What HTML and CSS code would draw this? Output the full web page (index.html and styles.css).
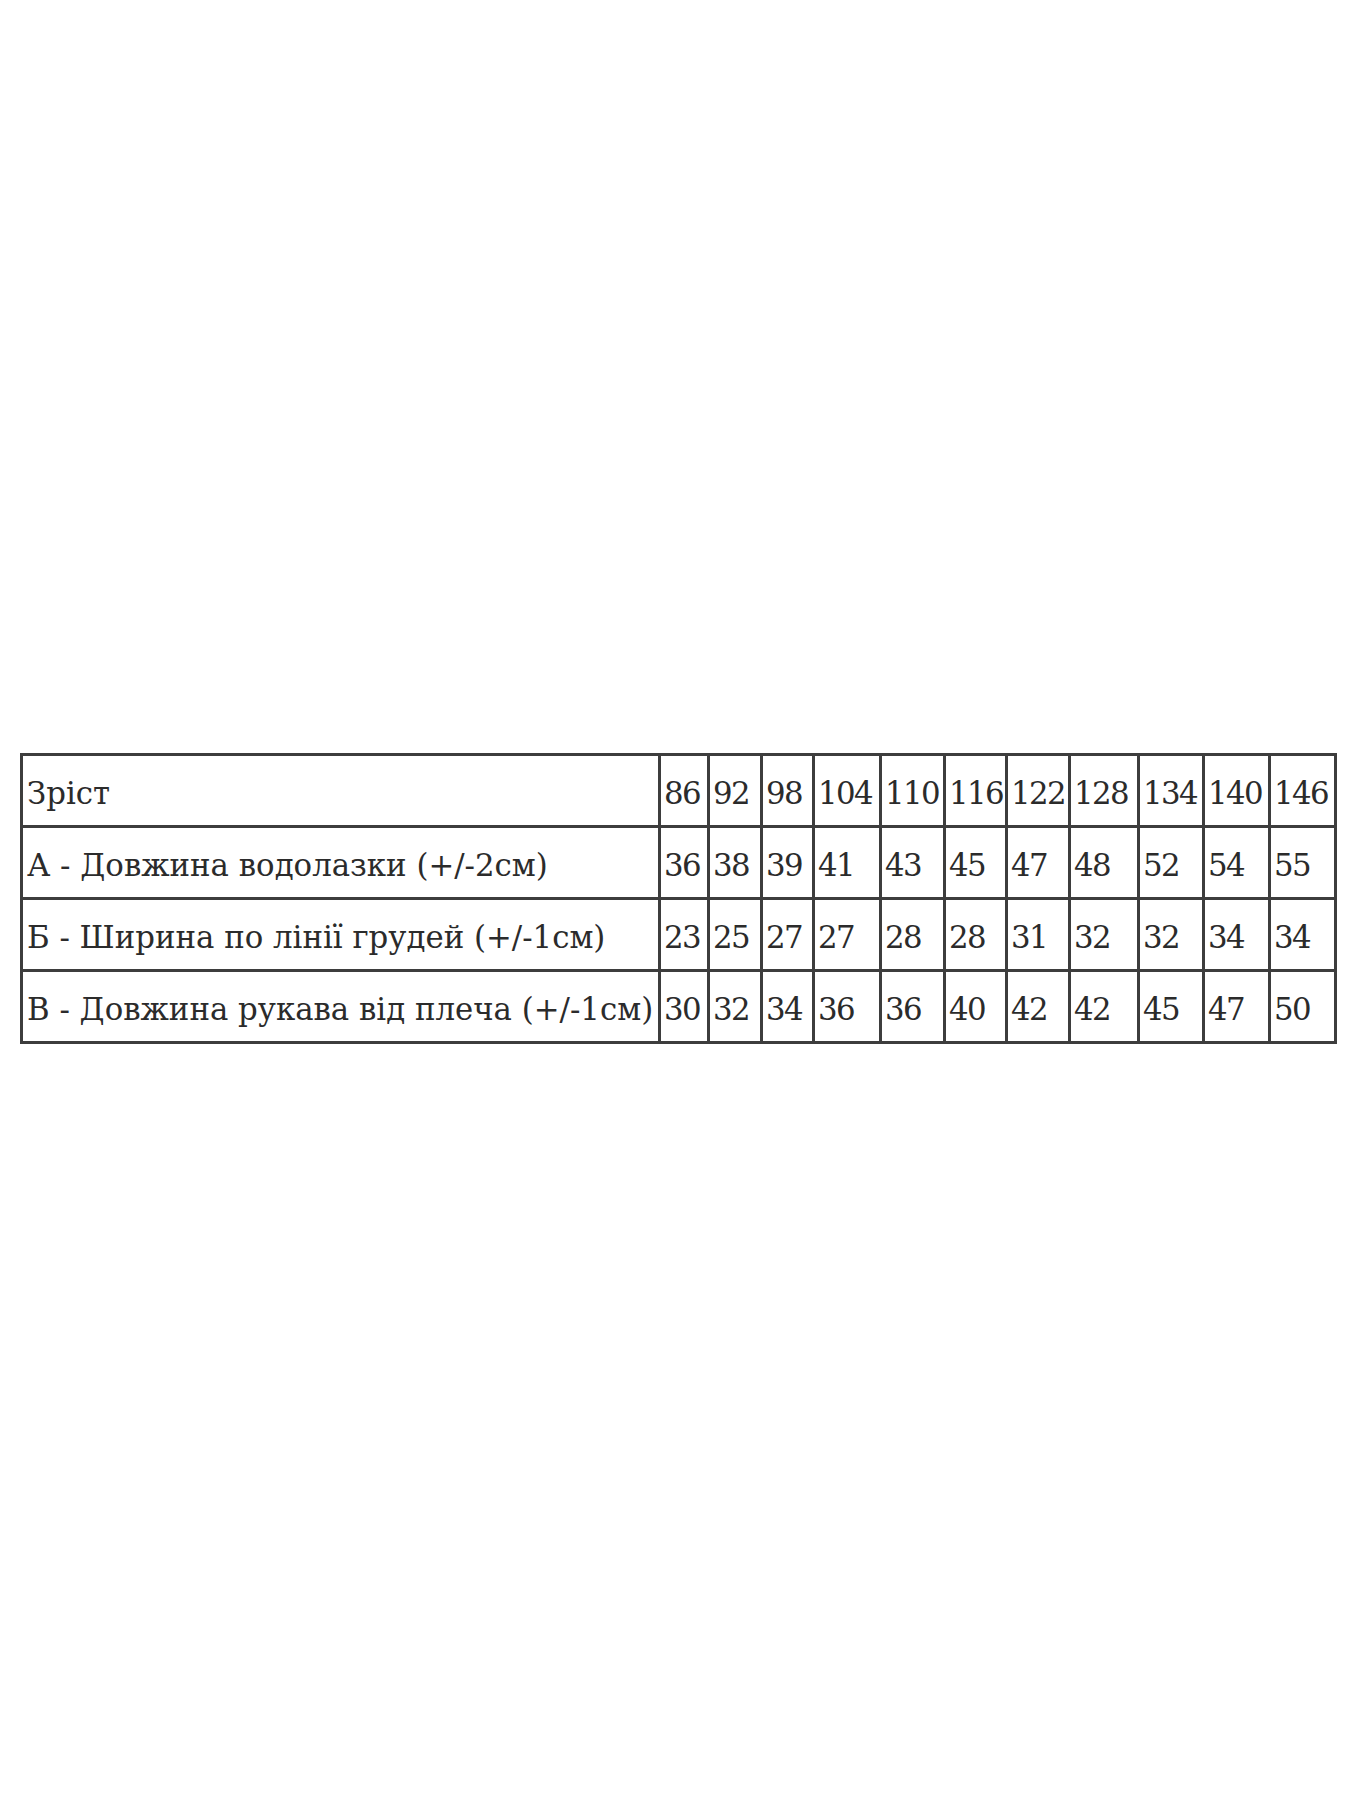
FILE: index.html
```html
<!DOCTYPE html>
<html lang="uk">
<head>
<meta charset="utf-8">
<title>Розмірна сітка</title>
<link rel="stylesheet" href="styles.css">
</head>
<body>
<div class="page">
  <table class="sizes">
    <colgroup>
      <col class="c-label">
      <col class="c-49"><col class="c-53"><col class="c-52"><col class="c-67">
      <col class="c-64"><col class="c-62"><col class="c-63"><col class="c-69">
      <col class="c-65"><col class="c-66"><col class="c-66">
    </colgroup>
    <tbody>
      <tr>
        <td>Зріст</td>
        <td>86</td><td>92</td><td>98</td><td>104</td><td>110</td><td>116</td><td>122</td><td>128</td><td>134</td><td>140</td><td>146</td>
      </tr>
      <tr>
        <td>А - Довжина водолазки (+/-2см)</td>
        <td>36</td><td>38</td><td>39</td><td>41</td><td>43</td><td>45</td><td>47</td><td>48</td><td>52</td><td>54</td><td>55</td>
      </tr>
      <tr>
        <td>Б - Ширина по лінії грудей (+/-1см)</td>
        <td>23</td><td>25</td><td>27</td><td>27</td><td>28</td><td>28</td><td>31</td><td>32</td><td>32</td><td>34</td><td>34</td>
      </tr>
      <tr>
        <td>В - Довжина рукава від плеча (+/-1см)</td>
        <td>30</td><td>32</td><td>34</td><td>36</td><td>36</td><td>40</td><td>42</td><td>42</td><td>45</td><td>47</td><td>50</td>
      </tr>
    </tbody>
  </table>
</div>
</body>
</html>
```

FILE: styles.css
```css
html, body {
  margin: 0;
  padding: 0;
  background: #ffffff;
}

.page {
  padding: 753px 0 0 20px;
  min-height: 1047px;
}

.sizes {
  border-collapse: collapse;
  table-layout: fixed;
  width: 1317px;
  font-family: "DejaVu Serif", "Liberation Serif", serif;
  font-size: 30.8px;
  color: #2b2b2b;
}

.sizes td {
  border: 3px solid #3d3d3d;
  height: 65px;
  padding: 4px 0 0 4px;
  white-space: nowrap;
  overflow: hidden;
  vertical-align: middle;
  text-align: left;
}

.sizes td + td {
  padding-left: 3px;
  letter-spacing: -1.6px;
}

.c-label { width: 638px; }
.c-49 { width: 49px; }
.c-52 { width: 52px; }
.c-53 { width: 53px; }
.c-62 { width: 62px; }
.c-63 { width: 63px; }
.c-64 { width: 64px; }
.c-65 { width: 65px; }
.c-66 { width: 66px; }
.c-67 { width: 67px; }
.c-69 { width: 69px; }
```
